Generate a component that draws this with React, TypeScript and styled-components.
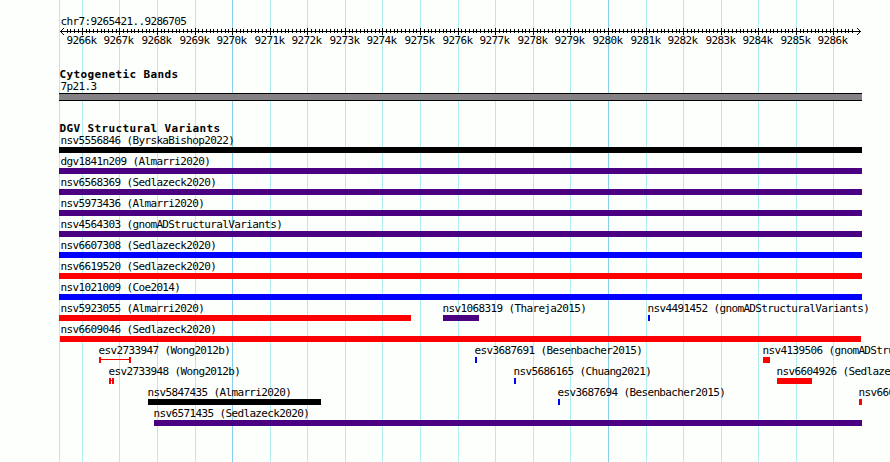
import React from "react";
import styled, { createGlobalStyle } from "styled-components";

const GlobalStyle = createGlobalStyle`
  html, body { margin: 0; padding: 0; background: #fdfffc; }
  body { overflow: hidden; }
`;

const INDIGO = "#4b0082";
const BLUE = "#0000ff";
const RED = "#ff0000";
const BLACK = "#000000";

const REGION_START = 9265421;
const PIXELS_PER_BASE = 800 / 21285;
const toPixel = (base: number) => Math.round(60 + (base - REGION_START) * PIXELS_PER_BASE);

const kilobases = Array.from({ length: 21 }, (_, i) => 9266 + i);
const majorTicks = kilobases.map((kb) => ({ kb, x: toPixel(kb * 1000) }));
const minorTicks = Array.from({ length: 210 }, (_, i) => toPixel(9265600 + i * 100));

const Browser = styled.main`
  position: relative;
  box-sizing: border-box;
  width: 890px;
  height: 462px;
  padding-top: 16px;
  overflow: hidden;
  background: #fdfffc;
  color: #000;
  font: 11px/12px "DejaVu Sans Mono", monospace;
  letter-spacing: -0.63px;
  white-space: pre;
`;

const GridLine = styled.i<{ $x: number; $strong?: boolean }>`
  position: absolute;
  top: 0;
  bottom: 0;
  left: ${(p) => p.$x}px;
  width: 1px;
  background: ${(p) => (p.$strong ? "#87ceeb" : "#afeeee")};
`;

const RegionName = styled.div`
  position: relative;
  height: 12px;
  padding-left: 60.5px;
`;

const Ruler = styled.svg`
  position: relative;
  display: block;
  width: 890px;
  height: 8px;
  margin-top: -1px;
  shape-rendering: crispEdges;
`;

const Scale = styled.div`
  position: relative;
  height: 12px;
`;

const ScaleLabel = styled.span<{ $x: number }>`
  position: absolute;
  left: ${(p) => p.$x}px;
`;

const Section = styled.section`
  position: relative;
  margin-top: 22px;
`;

const Title = styled.h2`
  height: 12px;
  margin: 0;
  padding-left: 59.5px;
  font-size: 11px;
  font-weight: 700;
  letter-spacing: 0.378px;
`;

const BandName = styled.div`
  height: 12px;
  padding-left: 60.5px;
`;

const Band = styled.div`
  box-sizing: border-box;
  width: 803px;
  height: 8px;
  margin-left: 59px;
  border: solid #000;
  border-width: 1px 0;
  background: #848284;
`;

const Track = styled.div`
  position: relative;
  height: 21px;
`;

const Feature = styled.div<{ $x: number }>`
  position: absolute;
  top: 0;
  left: ${(p) => p.$x}px;
`;

const FeatureLabel = styled.div<{ $shift: number }>`
  height: 12px;
  margin-left: ${(p) => p.$shift}px;
`;

const Bar = styled.div<{ $w: number; $color: string }>`
  width: ${(p) => p.$w}px;
  height: 6px;
  background: ${(p) => p.$color};
`;

const Span = styled.div<{ $w: number; $color: string }>`
  box-sizing: border-box;
  display: flex;
  align-items: flex-start;
  width: ${(p) => p.$w}px;
  height: 6px;
  border: solid ${(p) => p.$color};
  border-width: 0 2px;

  &::before {
    content: "";
    flex: 1;
    height: 1px;
    margin-top: 2px;
    background: ${(p) => p.$color};
  }
`;

type Variant = { name: string; from: number; to: number; color: string; open?: boolean };

const full = (name: string, color: string): Variant[] => [{ name, from: 59, to: 862, color }];

const tracks: Variant[][] = [
  full("nsv5556846 (ByrskaBishop2022)", BLACK),
  full("dgv1841n209 (Almarri2020)", INDIGO),
  full("nsv6568369 (Sedlazeck2020)", INDIGO),
  full("nsv5973436 (Almarri2020)", INDIGO),
  full("nsv4564303 (gnomADStructuralVariants)", INDIGO),
  full("nsv6607308 (Sedlazeck2020)", BLUE),
  full("nsv6619520 (Sedlazeck2020)", RED),
  full("nsv1021009 (Coe2014)", BLUE),
  [
    { name: "nsv5923055 (Almarri2020)", from: 59, to: 411, color: RED },
    { name: "nsv1068319 (Thareja2015)", from: 443, to: 479, color: INDIGO },
    { name: "nsv4491452 (gnomADStructuralVariants)", from: 648, to: 650, color: BLUE },
  ],
  [{ name: "nsv6609046 (Sedlazeck2020)", from: 60, to: 861, color: RED }],
  [
    { name: "esv2733947 (Wong2012b)", from: 99, to: 131, color: RED, open: true },
    { name: "esv3687691 (Besenbacher2015)", from: 475, to: 477, color: BLUE },
    { name: "nsv4139506 (gnomADStructuralVariants)", from: 763, to: 770, color: RED },
  ],
  [
    { name: "esv2733948 (Wong2012b)", from: 109, to: 114, color: RED, open: true },
    { name: "nsv5686165 (Chuang2021)", from: 514, to: 516, color: BLUE },
    { name: "nsv6604926 (Sedlazeck2020)", from: 777, to: 812, color: RED },
  ],
  [
    { name: "nsv5847435 (Almarri2020)", from: 148, to: 321, color: BLACK },
    { name: "esv3687694 (Besenbacher2015)", from: 558, to: 560, color: BLUE },
    { name: "nsv660", from: 859, to: 862, color: RED },
  ],
  [{ name: "nsv6571435 (Sedlazeck2020)", from: 154, to: 862, color: INDIGO }],
];

export default function App() {
  return (
    <Browser>
      <GlobalStyle />
      <GridLine $x={59} />
      {majorTicks.map(({ kb, x }) => (
        <GridLine key={kb} $x={x} $strong={kb % 10 === 0} />
      ))}

      <RegionName>chr7:9265421..9286705</RegionName>
      <Ruler viewBox="0 27 890 8">
        <rect x={60} y={31} width={801} height={1} />
        {minorTicks.map((x) => (
          <rect key={x} x={x} y={29} width={1} height={4} />
        ))}
        {majorTicks.map(({ kb, x }) => (
          <rect key={kb} x={x} y={28} width={1} height={7} />
        ))}
        <path d="M61 30h1v1h-1zM62 29h1v1h-1zM63 28h1v1h-1zM61 32h1v1h-1zM62 33h1v1h-1zM63 34h1v1h-1z" />
        <path d="M859 30h1v1h-1zM858 29h1v1h-1zM857 28h1v1h-1zM859 32h1v1h-1zM858 33h1v1h-1zM857 34h1v1h-1z" />
      </Ruler>
      <Scale>
        {majorTicks.map(({ kb, x }) => (
          <ScaleLabel key={kb} $x={x - 15.5}>{`${kb}k`}</ScaleLabel>
        ))}
      </Scale>

      <Section>
        <Title>Cytogenetic Bands</Title>
        <BandName>7p21.3</BandName>
        <Band />
      </Section>

      <Section>
        <Title>DGV Structural Variants</Title>
        {tracks.map((variants, i) => (
          <Track key={i}>
            {variants.map(({ name, from, to, color, open }) => (
              <Feature key={name} $x={from}>
                <FeatureLabel $shift={from === 59 ? 1.5 : from === 60 ? 0.5 : -0.5}>{name}</FeatureLabel>
                {open ? <Span $w={to - from} $color={color} /> : <Bar $w={to - from} $color={color} />}
              </Feature>
            ))}
          </Track>
        ))}
      </Section>
    </Browser>
  );
}
